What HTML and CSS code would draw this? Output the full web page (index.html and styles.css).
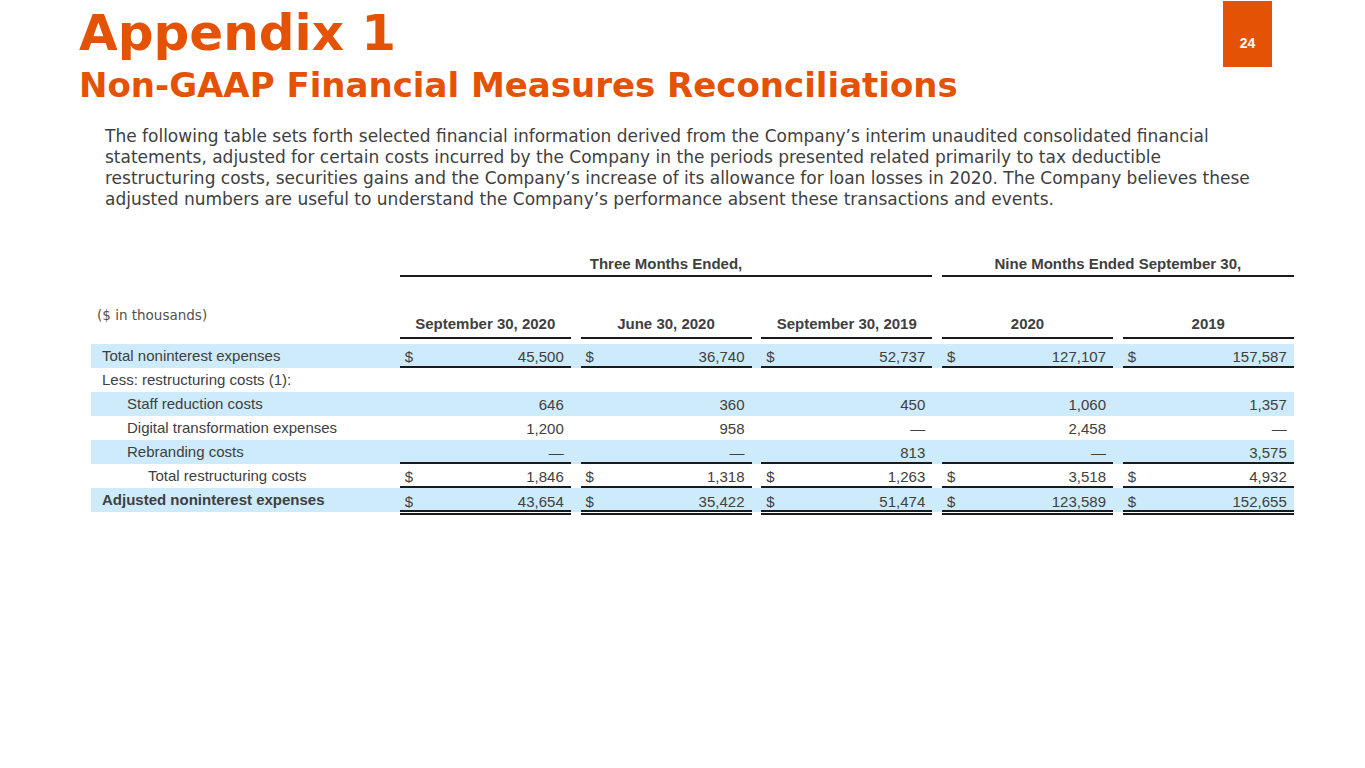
FILE: index.html
```html
<!DOCTYPE html>
<html lang="en">
<head>
<meta charset="utf-8">
<title>Appendix 1</title>
<link rel="stylesheet" href="styles.css">
</head>
<body>
<div class="slide">
  <header class="head">
    <div class="titles">
      <h1 class="title">Appendix 1</h1>
      <h2 class="subtitle">Non-GAAP Financial Measures Reconciliations</h2>
    </div>
    <div class="badge">24</div>
  </header>

  <p class="intro">The following table sets forth selected financial information derived from the Company’s interim unaudited consolidated financial statements, adjusted for certain costs incurred by the Company in the periods presented related primarily to tax deductible restructuring costs, securities gains and the Company’s increase of its allowance for loan losses in 2020. The Company believes these adjusted numbers are useful to understand the Company’s performance absent these transactions and events.</p>

  <div class="fin">
    <div class="row group">
      <div class="lbl"></div>
      <div class="ghead span3">Three Months Ended,</div>
      <div class="ghead span2">Nine Months Ended September 30,</div>
    </div>
    <div class="row colhead">
      <div class="lbl units">($ in thousands)</div>
      <div class="chead">September 30, 2020</div>
      <div class="chead">June 30, 2020</div>
      <div class="chead">September 30, 2019</div>
      <div class="chead">2020</div>
      <div class="chead">2019</div>
    </div>

    <div class="row data shade">
      <div class="lbl">Total noninterest expenses</div>
      <div class="val ul"><span>$</span><span>45,500</span></div>
      <div class="val ul"><span>$</span><span>36,740</span></div>
      <div class="val ul"><span>$</span><span>52,737</span></div>
      <div class="val ul"><span>$</span><span>127,107</span></div>
      <div class="val ul"><span>$</span><span>157,587</span></div>
    </div>
    <div class="row data">
      <div class="lbl">Less: restructuring costs (1):</div>
      <div class="val"></div><div class="val"></div><div class="val"></div><div class="val"></div><div class="val"></div>
    </div>
    <div class="row data shade">
      <div class="lbl ind1">Staff reduction costs</div>
      <div class="val"><span></span><span>646</span></div>
      <div class="val"><span></span><span>360</span></div>
      <div class="val"><span></span><span>450</span></div>
      <div class="val"><span></span><span>1,060</span></div>
      <div class="val"><span></span><span>1,357</span></div>
    </div>
    <div class="row data">
      <div class="lbl ind1">Digital transformation expenses</div>
      <div class="val"><span></span><span>1,200</span></div>
      <div class="val"><span></span><span>958</span></div>
      <div class="val"><span></span><span>—</span></div>
      <div class="val"><span></span><span>2,458</span></div>
      <div class="val"><span></span><span>—</span></div>
    </div>
    <div class="row data shade">
      <div class="lbl ind1">Rebranding costs</div>
      <div class="val ul"><span></span><span>—</span></div>
      <div class="val ul"><span></span><span>—</span></div>
      <div class="val ul"><span></span><span>813</span></div>
      <div class="val ul"><span></span><span>—</span></div>
      <div class="val ul"><span></span><span>3,575</span></div>
    </div>
    <div class="row data">
      <div class="lbl ind2">Total restructuring costs</div>
      <div class="val ul"><span>$</span><span>1,846</span></div>
      <div class="val ul"><span>$</span><span>1,318</span></div>
      <div class="val ul"><span>$</span><span>1,263</span></div>
      <div class="val ul"><span>$</span><span>3,518</span></div>
      <div class="val ul"><span>$</span><span>4,932</span></div>
    </div>
    <div class="row data shade total">
      <div class="lbl">Adjusted noninterest expenses</div>
      <div class="val dul"><span>$</span><span>43,654</span></div>
      <div class="val dul"><span>$</span><span>35,422</span></div>
      <div class="val dul"><span>$</span><span>51,474</span></div>
      <div class="val dul"><span>$</span><span>123,589</span></div>
      <div class="val dul"><span>$</span><span>152,655</span></div>
    </div>
  </div>
</div>
</body>
</html>
```

FILE: styles.css
```css
* { box-sizing: border-box; }
html, body {
  margin: 0;
  padding: 0;
  background: #ffffff;
}
.slide {
  width: 1365px;
  height: 768px;
  position: relative;
  overflow: hidden;
}
.head {
  display: flex;
  justify-content: space-between;
  align-items: flex-start;
  padding: 0 93px 0 79px;
}
.titles {
  display: flex;
  flex-direction: column;
}
.title {
  margin: 3px 0 0 0;
  font-family: "DejaVu Sans", Verdana, sans-serif;
  font-weight: bold;
  font-size: 50px;
  line-height: 60px;
  color: #e35205;
}
.subtitle {
  margin: 2px 0 0 0;
  font-family: "DejaVu Sans", Verdana, sans-serif;
  font-weight: bold;
  font-size: 34px;
  line-height: 40px;
  color: #e35205;
  white-space: nowrap;
}
.badge {
  margin-top: 1px;
  width: 49px;
  height: 66px;
  background: #e35205;
  color: #ffffff;
  font-family: "Liberation Sans", Arial, sans-serif;
  font-weight: bold;
  font-size: 14px;
  display: flex;
  align-items: center;
  justify-content: center;
  padding-top: 18px;
}
.intro {
  margin: 21px 0 0 105px;
  width: 1162px;
  font-family: "DejaVu Sans", Verdana, sans-serif;
  font-size: 17px;
  line-height: 21px;
  color: #404040;
}
.fin {
  margin: 43px 0 0 91px;
  width: 1203px;
  font-family: "Liberation Sans", Arial, sans-serif;
  font-size: 15px;
  color: #404040;
}
.row {
  display: grid;
  grid-template-columns: 299px repeat(5, 171px);
  column-gap: 9.75px;
}
.group {
  height: 24px;
}
.ghead {
  font-weight: bold;
  text-align: center;
  border-bottom: 2px solid #1a1a1a;
  line-height: 22px;
}
.span3 { grid-column: span 3; }
.span2 { grid-column: span 2; }
.colhead {
  margin-top: 36px;
  height: 26px;
  margin-bottom: 5px;
}
.lbl.units {
  font-family: "DejaVu Sans", Verdana, sans-serif;
  font-size: 13.5px;
  color: #505050;
  padding-left: 6px;
  margin-top: -8px;
  line-height: 20px;
}
.chead {
  font-weight: bold;
  text-align: center;
  border-bottom: 2px solid #1a1a1a;
  line-height: 22px;
}
.data {
  height: 24px;
  align-items: stretch;
}
.shade {
  background: #cdebfa;
}
.lbl {
  padding-left: 11px;
  line-height: 24px;
  white-space: nowrap;
}
.lbl.ind1 { padding-left: 36px; }
.lbl.ind2 { padding-left: 57px; }
.total .lbl { font-weight: bold; }
.val {
  display: flex;
  justify-content: space-between;
  align-items: center;
  padding: 0 7px 0 5px;
}
.ul {
  border-bottom: 2px solid #1a1a1a;
  padding-top: 2px;
}
.dul {
  border-bottom: 5px double #1a1a1a;
  padding-top: 5px;
}
```
